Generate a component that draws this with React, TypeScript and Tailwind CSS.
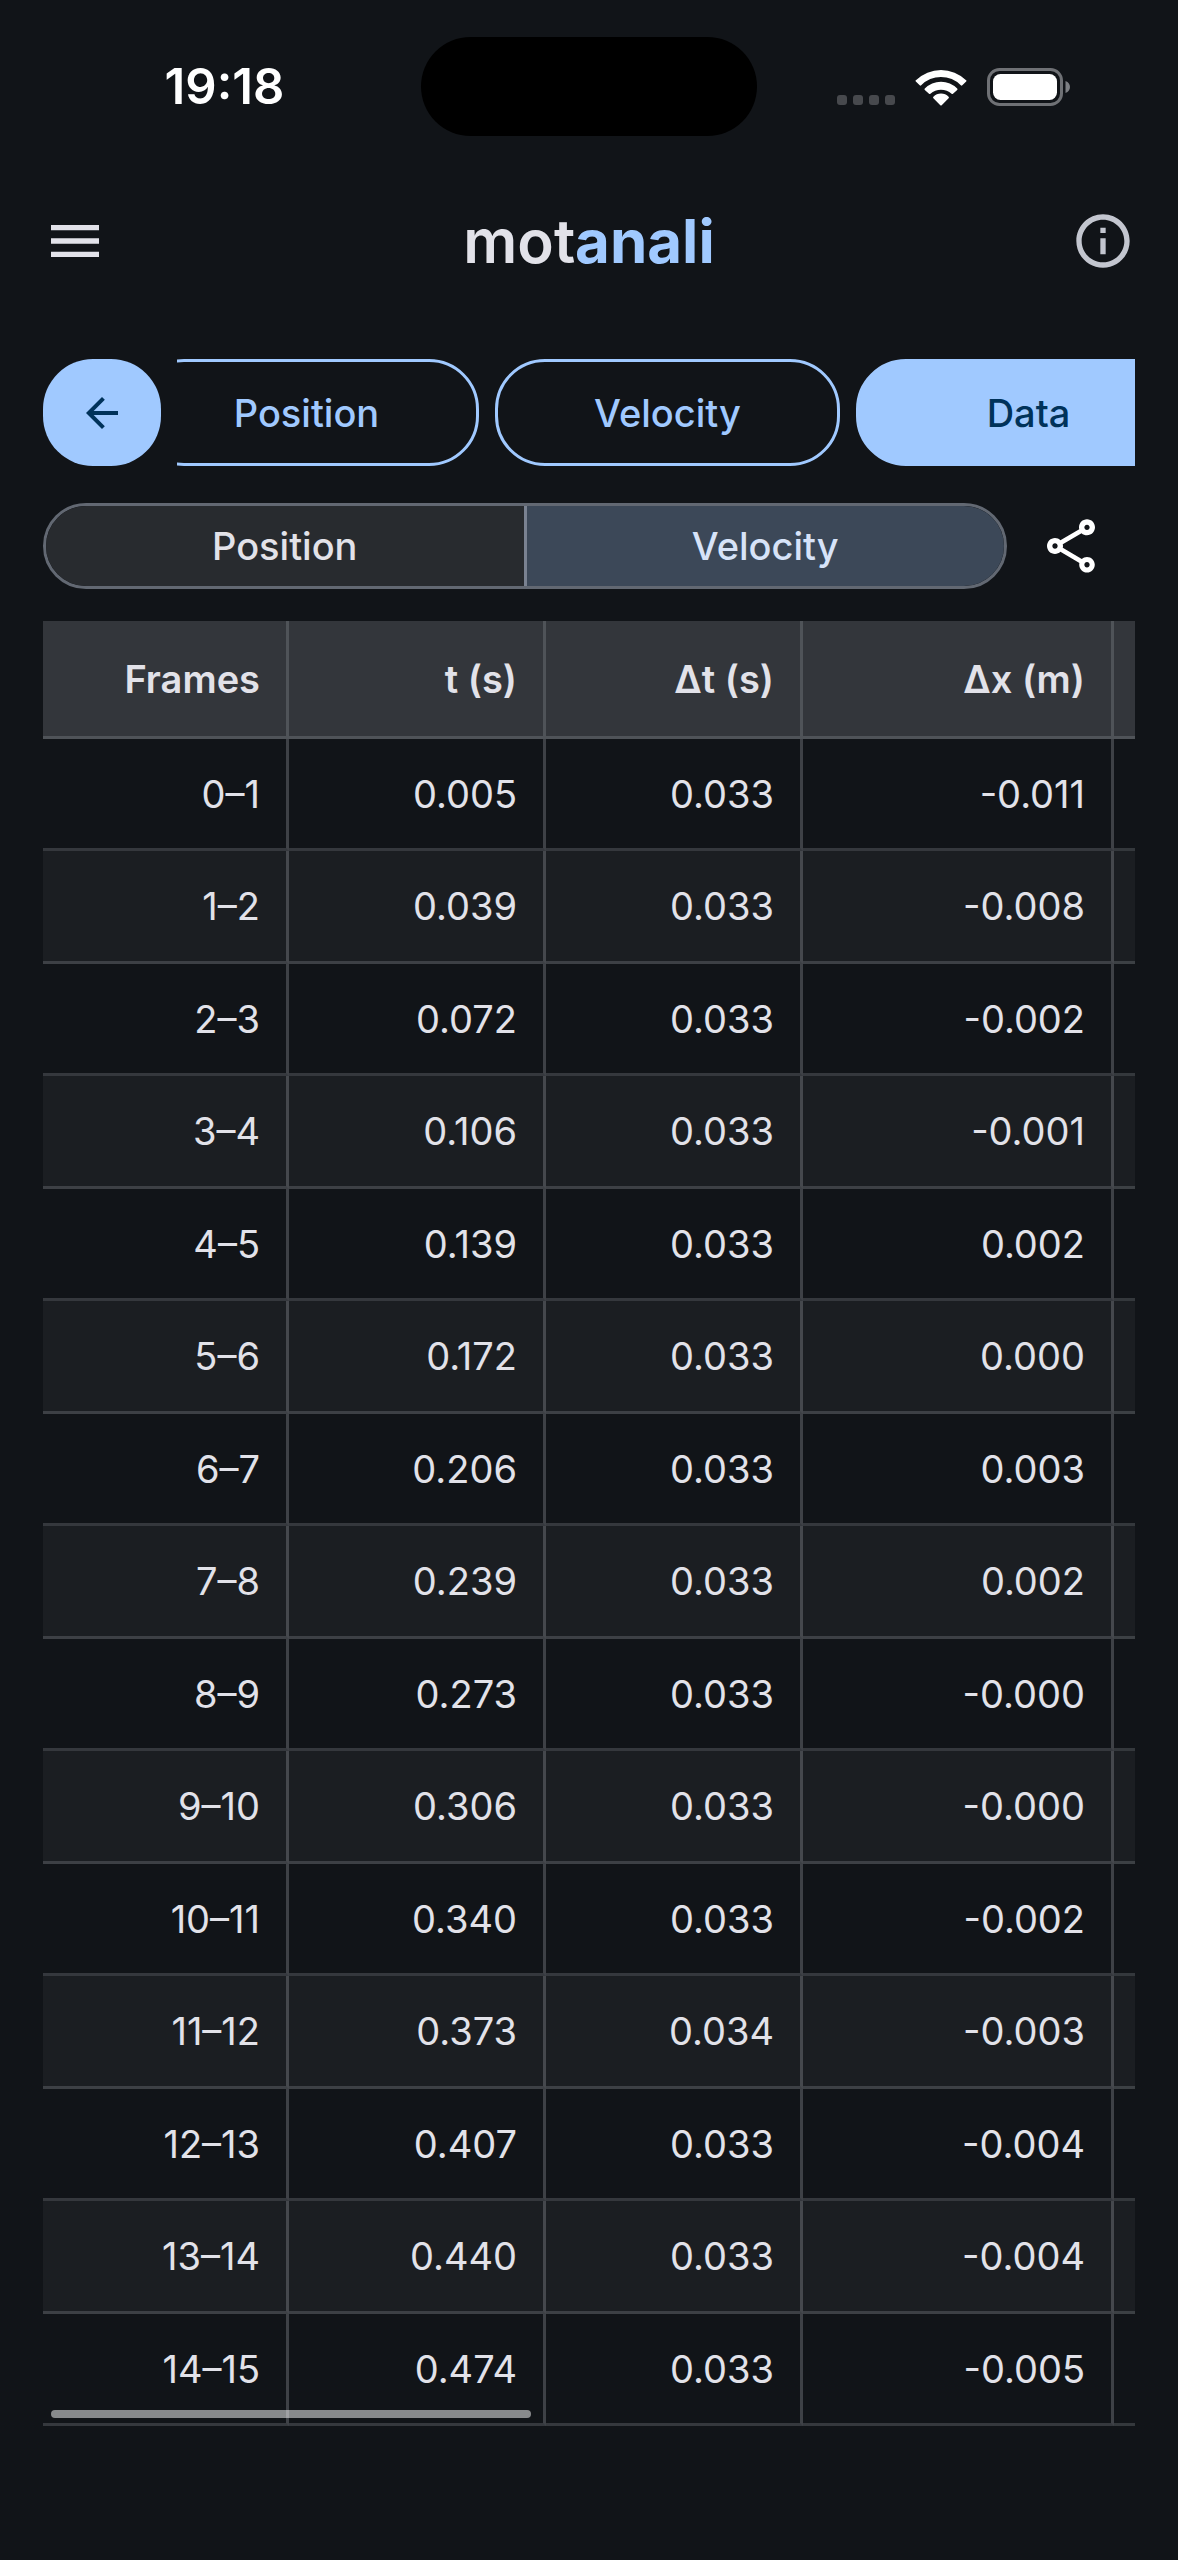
import React, { useLayoutEffect, useRef, useState } from "react";
import { MdArrowBack, MdInfoOutline, MdMenu, MdOutlineShare } from "react-icons/md";

type Series = "Position" | "Velocity";

const TABS = ["Position", "Velocity", "Data"];
const SERIES: Series[] = ["Position", "Velocity"];
const COLUMNS = ["Frames", "t (s)", "Δt (s)", "Δx (m)"];

const ROWS = [
  ["0–1", "0.005", "0.033", "-0.011"],
  ["1–2", "0.039", "0.033", "-0.008"],
  ["2–3", "0.072", "0.033", "-0.002"],
  ["3–4", "0.106", "0.033", "-0.001"],
  ["4–5", "0.139", "0.033", "0.002"],
  ["5–6", "0.172", "0.033", "0.000"],
  ["6–7", "0.206", "0.033", "0.003"],
  ["7–8", "0.239", "0.033", "0.002"],
  ["8–9", "0.273", "0.033", "-0.000"],
  ["9–10", "0.306", "0.033", "-0.000"],
  ["10–11", "0.340", "0.033", "-0.002"],
  ["11–12", "0.373", "0.034", "-0.003"],
  ["12–13", "0.407", "0.033", "-0.004"],
  ["13–14", "0.440", "0.033", "-0.004"],
  ["14–15", "0.474", "0.033", "-0.005"],
];

function StatusBar() {
  return (
    <div className="grid grid-cols-[1fr_336px_1fr] items-center pt-[37px]">
      <span className="pl-7 text-center text-[49px] leading-[56px] font-semibold text-white">
        19:18
      </span>
      <div className="h-[99px] rounded-full bg-black" />
      <div className="flex items-center justify-center pr-7">
        <svg className="mr-5 h-[38px] w-[58px]" viewBox="0 0 58 38" fill="#47494d">
          <rect x="0" y="27" width="10" height="10" rx="3" />
          <rect x="16" y="27" width="10" height="10" rx="3" />
          <rect x="32" y="27" width="10" height="10" rx="3" />
          <rect x="48" y="27" width="10" height="10" rx="3" />
        </svg>
        <svg className="mr-5 h-[38px] w-[52px]" viewBox="0 0 52 38" fill="white">
          <path d="M0.9 12.2A36 36 0 0 1 51.1 12.2Q51.9 12.8 51.2 13.5L47.3 17.3Q46.6 18 45.8 17.3A27.5 27.5 0 0 0 6.2 17.3Q5.4 18 4.7 17.3L0.8 13.5Q0.1 12.8 0.9 12.2Z" />
          <path d="M9.8 20.6A22.5 22.5 0 0 1 42.2 20.6Q42.9 21.3 42.2 22L38 25.8Q37.3 26.4 36.6 25.8A15.7 15.7 0 0 0 15.4 25.8Q14.7 26.4 14 25.8L9.8 22Q9.1 21.3 9.8 20.6Z" />
          <path d="M18.4 28.7A10.5 10.5 0 0 1 33.6 28.7Q34.4 29.5 33.6 30.3L26.7 37.2Q26 37.9 25.3 37.2L18.4 30.3Q17.6 29.5 18.4 28.7Z" />
        </svg>
        <svg className="h-[38px] w-[84px]" viewBox="0 0 84 38" fill="none">
          <rect x="1.5" y="1.5" width="73" height="35" rx="11" stroke="#6f7175" strokeWidth="3" />
          <rect x="6" y="6" width="64" height="26" rx="7.5" fill="white" />
          <path d="M78.5 13C81.5 14 83 16.500 83 19C83 21.500 81.500 24 78.500 25Z" fill="#7d7f83" />
        </svg>
      </div>
    </div>
  );
}

function DataTable() {
  return (
    <div className="relative mt-8">
      <div className="overflow-x-hidden">
        <table className="w-full table-fixed border-separate border-spacing-0 text-right text-[38px] leading-[44px] text-[#e2e2e9]">
          <colgroup>
            <col className="w-[246px]" />
            <col className="w-[257px]" />
            <col className="w-[257px]" />
            <col className="w-[311px]" />
            <col />
          </colgroup>
          <thead>
            <tr className="h-[118px] bg-[#33363b]">
              {COLUMNS.map((label) => (
                <th
                  key={label}
                  scope="col"
                  className="border-r-[3px] border-b-[3px] border-[#c3c6cf]/20 pr-[26px] font-semibold"
                >
                  {label}
                </th>
              ))}
              <td className="border-b-[3px] border-[#c3c6cf]/20" />
            </tr>
          </thead>
          <tbody>
            {ROWS.map((row) => (
              <tr key={row[0]} className="h-[112px] even:h-[113px] even:bg-[#1b1e22]">
                {row.map((value, i) => (
                  <td
                    key={i}
                    className="border-r-[3px] border-b-[3px] border-r-[#c3c6cf]/25 border-b-[#c3c6cf]/20 pr-[26px]"
                  >
                    {value}
                  </td>
                ))}
                <td className="border-b-[3px] border-[#c3c6cf]/20" />
              </tr>
            ))}
          </tbody>
        </table>
      </div>
      {/* Scroll indicator */}
      <div className="absolute bottom-2 left-2 h-2 w-[44%] rounded-full bg-white/50" />
    </div>
  );
}

export default function App() {
  const [tab, setTab] = useState("Data");
  const [series, setSeries] = useState<Series>("Velocity");
  const tabsRef = useRef<HTMLElement>(null);

  // Start with the tab strip scrolled towards the Data tab
  useLayoutEffect(() => {
    if (tabsRef.current) tabsRef.current.scrollLeft = 43;
  }, []);

  return (
    <div className="min-h-screen bg-[#111418] font-['Inter',sans-serif] text-[#e2e2e9]">
      <StatusBar />

      <header className="mt-[73px] flex items-center justify-between px-[43px]">
        <button type="button" aria-label="Menu">
          <MdMenu className="size-16" />
        </button>
        <h1 className="text-[60px] leading-[64px] font-semibold">
          mot<span className="font-bold text-[#a0c9ff]">anali</span>
        </h1>
        <button type="button" aria-label="Info" className="text-[#c3c6cf]">
          <MdInfoOutline className="size-16" />
        </button>
      </header>

      <main className="px-[43px] pt-[86px]">
        <div className="flex gap-4">
          <button
            type="button"
            aria-label="Back"
            className="flex h-[107px] w-[118px] shrink-0 items-center justify-center rounded-[50px] bg-[#a0c9ff] text-[#00325a]"
          >
            <MdArrowBack className="size-12" />
          </button>
          <nav ref={tabsRef} className="flex flex-1 gap-4 overflow-x-auto [scrollbar-width:none]">
            {TABS.map((label) => (
              <button
                key={label}
                type="button"
                onClick={() => setTab(label)}
                className={`h-[107px] w-[345px] shrink-0 rounded-[50px] border-[3px] border-[#a0c9ff] text-[38px] leading-[44px] font-medium ${
                  tab === label ? "bg-[#a0c9ff] text-[#00325a]" : "text-[#a0c9ff]"
                }`}
              >
                {label}
              </button>
            ))}
          </nav>
        </div>

        <div className="mt-[37px] flex items-center gap-4 pr-4">
          <div className="flex h-[86px] flex-1 overflow-hidden rounded-full border-[3px] border-[#626872]">
            {SERIES.map((name) => (
              <button
                key={name}
                type="button"
                aria-pressed={series === name}
                onClick={() => setSeries(name)}
                className={`flex-1 border-[#7a8291] text-[38px] leading-[44px] font-medium first:border-r-[3px] ${
                  series === name ? "bg-[#3c4858] text-[#d7e3f8]" : "bg-[#282b2f]"
                }`}
              >
                {name}
              </button>
            ))}
          </div>
          <button type="button" aria-label="Share" className="px-4 text-white">
            <MdOutlineShare className="size-16" />
          </button>
        </div>

        <DataTable />
      </main>
    </div>
  );
}
